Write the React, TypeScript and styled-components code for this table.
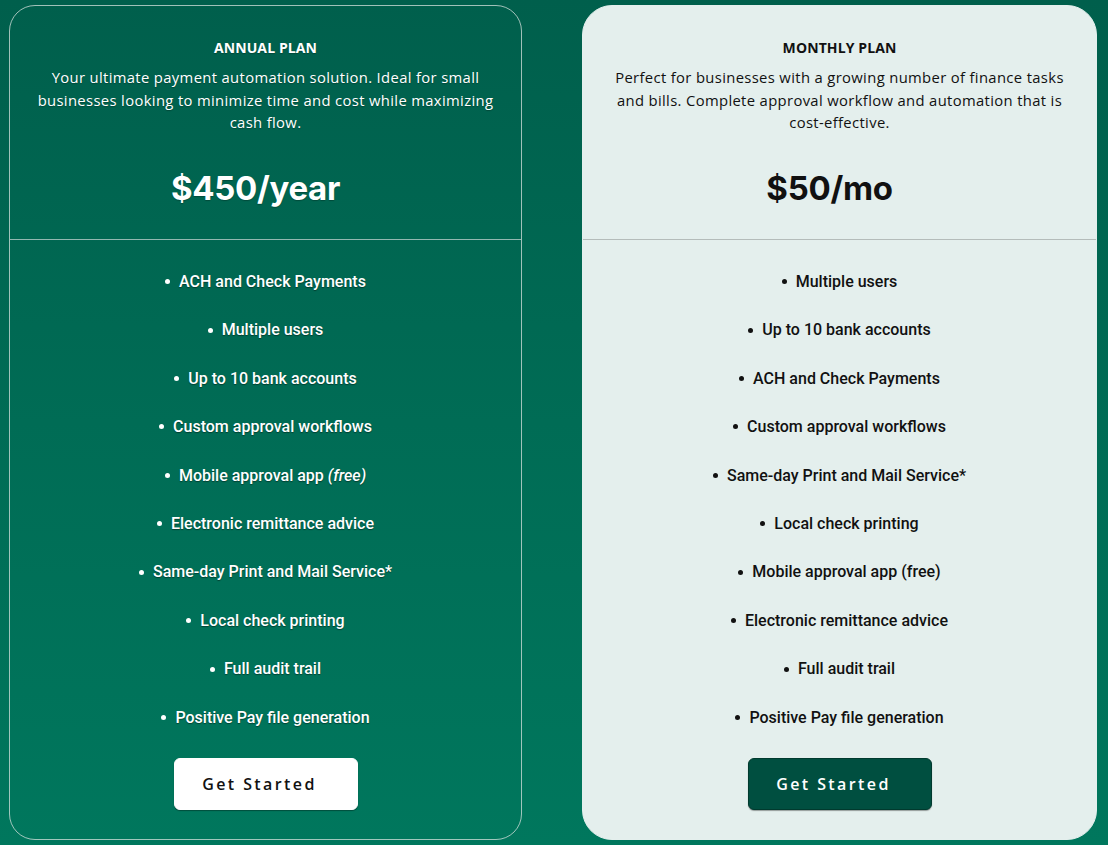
import React from "react";
import styled, { createGlobalStyle } from "styled-components";

type Variant = "dark" | "light";

interface Plan {
  readonly id: string;
  readonly title: string;
  readonly blurb: string;
  readonly price: string;
  readonly variant: Variant;
  readonly features: React.ReactNode[];
}

const plans: Plan[] = [
  {
    id: "annual",
    title: "ANNUAL PLAN",
    blurb:
      "Your ultimate payment automation solution. Ideal for small businesses looking to minimize time and cost while maximizing cash flow.",
    price: "$450/year",
    variant: "dark",
    features: [
      "ACH and Check Payments",
      "Multiple users",
      "Up to 10 bank accounts",
      "Custom approval workflows",
      <>
        Mobile approval app <em>(free)</em>
      </>,
      "Electronic remittance advice",
      "Same-day Print and Mail Service*",
      "Local check printing",
      "Full audit trail",
      "Positive Pay file generation",
    ],
  },
  {
    id: "monthly",
    title: "MONTHLY PLAN",
    blurb:
      "Perfect for businesses with a growing number of finance tasks and bills. Complete approval workflow and automation that is cost-effective.",
    price: "$50/mo",
    variant: "light",
    features: [
      "Multiple users",
      "Up to 10 bank accounts",
      "ACH and Check Payments",
      "Custom approval workflows",
      "Same-day Print and Mail Service*",
      "Local check printing",
      "Mobile approval app (free)",
      "Electronic remittance advice",
      "Full audit trail",
      "Positive Pay file generation",
    ],
  },
];

const GlobalStyle = createGlobalStyle`
  html, body {
    margin: 0;
    padding: 0;
  }
  body {
    background: linear-gradient(180deg, #005f4c 0%, #006c55 50%, #00775d 100%);
    min-height: 845px;
  }
`;

export default function App() {
  return (
    <>
      <GlobalStyle />
      <Page>
        {plans.map(plan => (
          <PlanCard key={plan.id} plan={plan} />
        ))}
      </Page>
    </>
  );
}

function PlanCard({ plan }: { readonly plan: Plan }) {
  const { variant } = plan;
  return (
    <Card variant={variant}>
      <Header variant={variant}>
        <Title>{plan.title}</Title>
        <Blurb>{plan.blurb}</Blurb>
        <Price>{plan.price}</Price>
      </Header>
      <FeatureList variant={variant}>
        {plan.features.map((feature, i) => (
          <Feature key={i} variant={variant}>
            {feature}
          </Feature>
        ))}
      </FeatureList>
      <StartButton variant={variant}>Get Started</StartButton>
    </Card>
  );
}

const Page = styled.div`
  display: flex;
  gap: 60px;
  padding: 5px 11px 5px 9px;
  box-sizing: border-box;
  height: 845px;
`;

interface VariantProps {
  readonly variant: Variant;
}

const Card = styled.div<VariantProps>`
  flex: 0 0 ${({ variant }) => (variant === "dark" ? "513px" : "515px")};
  box-sizing: border-box;
  height: 835px;
  display: flex;
  flex-direction: column;
  align-items: center;
  border-radius: ${({ variant }) => (variant === "dark" ? "26px" : "30px")};
  border: 1px solid
    ${({ variant }) => (variant === "dark" ? "rgba(215, 225, 222, 0.75)" : "#e4efed")};
  background: ${({ variant }) => (variant === "dark" ? "transparent" : "#e4efed")};
  color: ${({ variant }) => (variant === "dark" ? "#ffffff" : "#111111")};
  overflow: hidden;
`;

const Header = styled.div<VariantProps>`
  align-self: stretch;
  height: 234px;
  box-sizing: border-box;
  padding: 32px 20px 0;
  display: flex;
  flex-direction: column;
  align-items: center;
  text-align: center;
  border-bottom: 1px solid
    ${({ variant }) => (variant === "dark" ? "rgba(210, 220, 218, 0.7)" : "#b4bcba")};
  font-family: "Open Sans", "Noto Sans", sans-serif;
  text-shadow: ${({ variant }) =>
    variant === "dark" ? "0 1px 1px rgba(0, 30, 20, 0.35)" : "none"};
`;

const Title = styled.div`
  font-size: 14px;
  font-weight: 700;
  line-height: 20px;
  letter-spacing: 0.1px;
`;

const Blurb = styled.p`
  margin: 8px 0 0;
  font-size: 14.8px;
  font-weight: 500;
  line-height: 22.5px;
  letter-spacing: 0.35px;
  max-width: 470px;
`;

const Price = styled.div`
  margin-top: 34px;
  padding-right: 20px;
  font-family: Inter, "Liberation Sans", sans-serif;
  font-size: 33px;
  font-weight: 700;
  line-height: 40px;
  letter-spacing: -0.3px;
`;

const FeatureList = styled.ul<VariantProps>`
  list-style: none;
  margin: 0;
  padding: 18px 0 0;
  display: flex;
  flex-direction: column;
  align-items: center;
  font-family: Roboto, "Liberation Sans", sans-serif;
  font-size: 16px;
  font-weight: 500;
  text-shadow: ${({ variant }) =>
    variant === "dark" ? "0 1px 1px rgba(0, 30, 20, 0.55)" : "none"};

  em {
    font-style: italic;
  }
`;

const Feature = styled.li<VariantProps>`
  line-height: 48.4px;
  text-align: center;

  &::before {
    content: "";
    display: inline-block;
    width: 5px;
    height: 5px;
    border-radius: 50%;
    margin: 0 9px 2px 0;
    vertical-align: middle;
    background: ${({ variant }) => (variant === "dark" ? "#ffffff" : "#111111")};
  }
`;

const StartButton = styled.button<VariantProps>`
  margin-top: 16px;
  width: 184px;
  height: 52px;
  padding: 0 12px 0 0;
  border-radius: 6px;
  cursor: pointer;
  font-family: "Open Sans", "Noto Sans", sans-serif;
  font-size: 16px;
  font-weight: 600;
  letter-spacing: 2.4px;
  border: 1px solid ${({ variant }) => (variant === "dark" ? "#ffffff" : "#003a2e")};
  background: ${({ variant }) => (variant === "dark" ? "#ffffff" : "#004f40")};
  color: ${({ variant }) => (variant === "dark" ? "#111111" : "#ffffff")};
  box-shadow: 0 1px 1px rgba(0, 0, 0, 0.35);

  &:focus {
    outline: none;
  }
`;
